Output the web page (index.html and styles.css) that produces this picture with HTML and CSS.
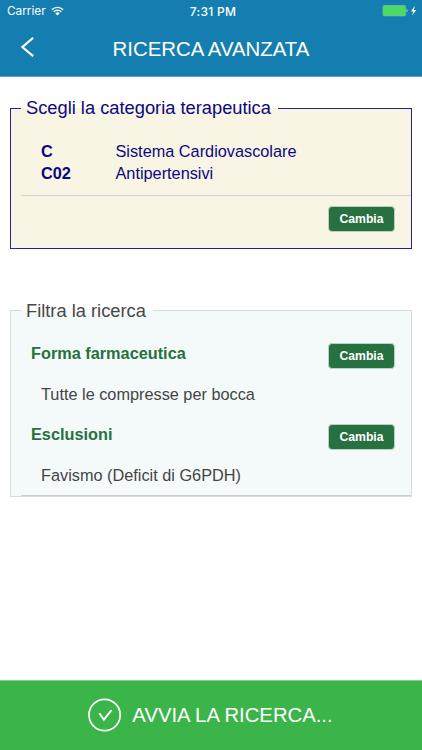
FILE: index.html
```html
<!DOCTYPE html>
<html lang="it">
<head>
  <meta charset="UTF-8" />
  <meta name="viewport" content="width=device-width, initial-scale=1.0"/>
  <title>Ricerca avanzata</title>
  <link rel="stylesheet" href="styles.css">
</head>
<body>

  <header class="header">
    <div class="status-bar">
      <div class="status-left">
        <span class="carrier">Carrier</span>
        <svg class="wifi" width="13" height="10" viewBox="0 0 13 10">
          <path d="M0.8 3.7a8.1 8.1 0 0 1 11.4 0M2.7 5.8a5.4 5.4 0 0 1 7.6 0" fill="none" stroke="#fff" stroke-width="1.4"/>
          <path d="M6.5 9.5L4.3 7.3a3.1 3.1 0 0 1 4.4 0z" fill="#fff"/>
        </svg>
      </div>
      <span class="time">7:31 PM</span>
      <div class="status-right">
        <svg width="35" height="12" viewBox="0 0 35 12">
          <rect x="1" y="0.5" width="22.6" height="10.4" rx="1.2" fill="#4cd964" stroke="#6cc39b" stroke-width="0.7"/>
          <path d="M24.5 4v3.4a1.9 1.9 0 0 0 0-3.4z" fill="#b9dfe0"/>
          <path d="M32.8 0.8L29 6.4h2.2L30.1 10.6 34.2 4.9h-2.3z" fill="#fff"/>
        </svg>
      </div>
    </div>
    <div class="nav-bar">
      <a class="back" href="#">
        <svg width="14" height="20" viewBox="0 0 14 20">
          <path d="M13.2 0.8L2.3 10.1l10.9 9" fill="none" stroke="#fff" stroke-width="2.1"/>
        </svg>
      </a>
      <h1>RICERCA AVANZATA</h1>
    </div>
  </header>

  <main class="content">
    <fieldset class="box box-category">
      <legend>Scegli la categoria terapeutica</legend>
      <div class="category-list">
        <div class="category-row"><b>C</b><span>Sistema Cardiovascolare</span></div>
        <div class="category-row"><b>C02</b><span>Antipertensivi</span></div>
      </div>
      <div class="category-footer">
        <button class="btn">Cambia</button>
      </div>
    </fieldset>

    <fieldset class="box box-filter">
      <legend>Filtra la ricerca</legend>
      <div class="filter-list">
        <div class="filter-title"><b>Forma farmaceutica</b><button class="btn">Cambia</button></div>
        <div class="filter-value">Tutte le compresse per bocca</div>
        <div class="filter-title"><b>Esclusioni</b><button class="btn">Cambia</button></div>
        <div class="filter-value">Favismo (Deficit di G6PDH)</div>
      </div>
    </fieldset>
  </main>

  <footer class="footer">
    <svg width="34" height="34" viewBox="0 0 34 34">
      <circle cx="17.6" cy="17" r="15.6" fill="none" stroke="#fff" stroke-width="1.7"/>
      <path d="M12.3 15.3l4.6 6.3 7.6-9.5" fill="none" stroke="#fff" stroke-width="1.9"/>
    </svg>
    <span class="footer-text">AVVIA LA RICERCA...</span>
  </footer>

</body>
</html>
```
FILE: styles.css
```css
* {
  box-sizing: border-box;
}

body {
  margin: 0;
  height: 750px;
  display: flex;
  flex-direction: column;
  font-family: "Liberation Sans", Arial, sans-serif;
  background: #fff;
  overflow: hidden;
}

.header {
  height: 77px;
  background: #147eb0;
  border-bottom: 1px solid #5c9fc0;
  color: #fff;
}

.status-bar {
  display: grid;
  grid-template-columns: 1fr auto 1fr;
  align-items: center;
  height: 22px;
  padding: 0 5px 0 7px;
  font-family: Inter, sans-serif;
  font-size: 12px;
}

.status-left {
  display: flex;
  align-items: center;
  gap: 5px;
}

.carrier {
  font-size: 11.8px;
}

.time {
  font-weight: 500;
  letter-spacing: 0.3px;
  padding-left: 2px;
}

.status-right {
  display: flex;
  justify-content: flex-end;
}

.nav-bar {
  display: grid;
  grid-template-columns: 40px 1fr 40px;
  align-items: center;
  height: 54px;
}

.back {
  display: flex;
  padding: 0 0 4px 20px;
}

h1 {
  margin: 0;
  font-size: 20.4px;
  font-weight: normal;
  text-align: center;
}

.content {
  flex: 1;
  padding: 21px 10px 0;
}

.box {
  margin: 0;
  padding: 0 0 0 10px;
  min-width: 0;
  border: 1px solid;
}

.box legend {
  height: 21px;
  padding: 0 7px 0 5px;
  font-size: 18.3px;
  line-height: 20px;
}

.box-category {
  height: 151px;
  background: #f8f5e4;
  border-color: #29208c;
  color: #0c0880;
  font-size: 16.3px;
}

.category-list {
  height: 77px;
  padding: 21px 0 0 20px;
  border-bottom: 1px solid #d3d3d5;
}

.category-row {
  display: flex;
  line-height: 22px;
}

.category-row b {
  width: 74.5px;
}

.category-footer {
  display: flex;
  justify-content: flex-end;
  padding: 10px 16px 0 0;
}

.btn {
  width: 67px;
  height: 26px;
  padding: 0;
  border: 1px solid #b5d2c3;
  border-radius: 4px;
  background: #27703f;
  color: #fff;
  font-family: inherit;
  font-size: 12.2px;
  font-weight: bold;
}

.box-filter {
  height: 197px;
  margin-top: 51px;
  background: #f4fafa;
  border-color: #d8dadb;
  color: #444;
  font-size: 16.3px;
}

.box-filter legend {
  color: #484848;
  line-height: 21px;
}

.filter-list {
  height: 175px;
  padding-top: 12px;
  border-bottom: 1px solid #cbcdce;
}

.filter-title {
  display: flex;
  align-items: center;
  justify-content: space-between;
  height: 41px;
  padding: 0 16px 0 10px;
  color: #27703f;
}

.filter-title .btn {
  margin-top: 4px;
}

.filter-value {
  height: 40px;
  padding-left: 20px;
  line-height: 40px;
}

.footer {
  display: flex;
  align-items: center;
  justify-content: center;
  gap: 11px;
  height: 70px;
  padding: 0 2px 2px 0;
  background: #3bb54a;
  border-top: 1px solid #82ce8b;
  color: #fff;
  font-size: 20.3px;
}

.footer-text {
  padding-top: 2px;
}
```
